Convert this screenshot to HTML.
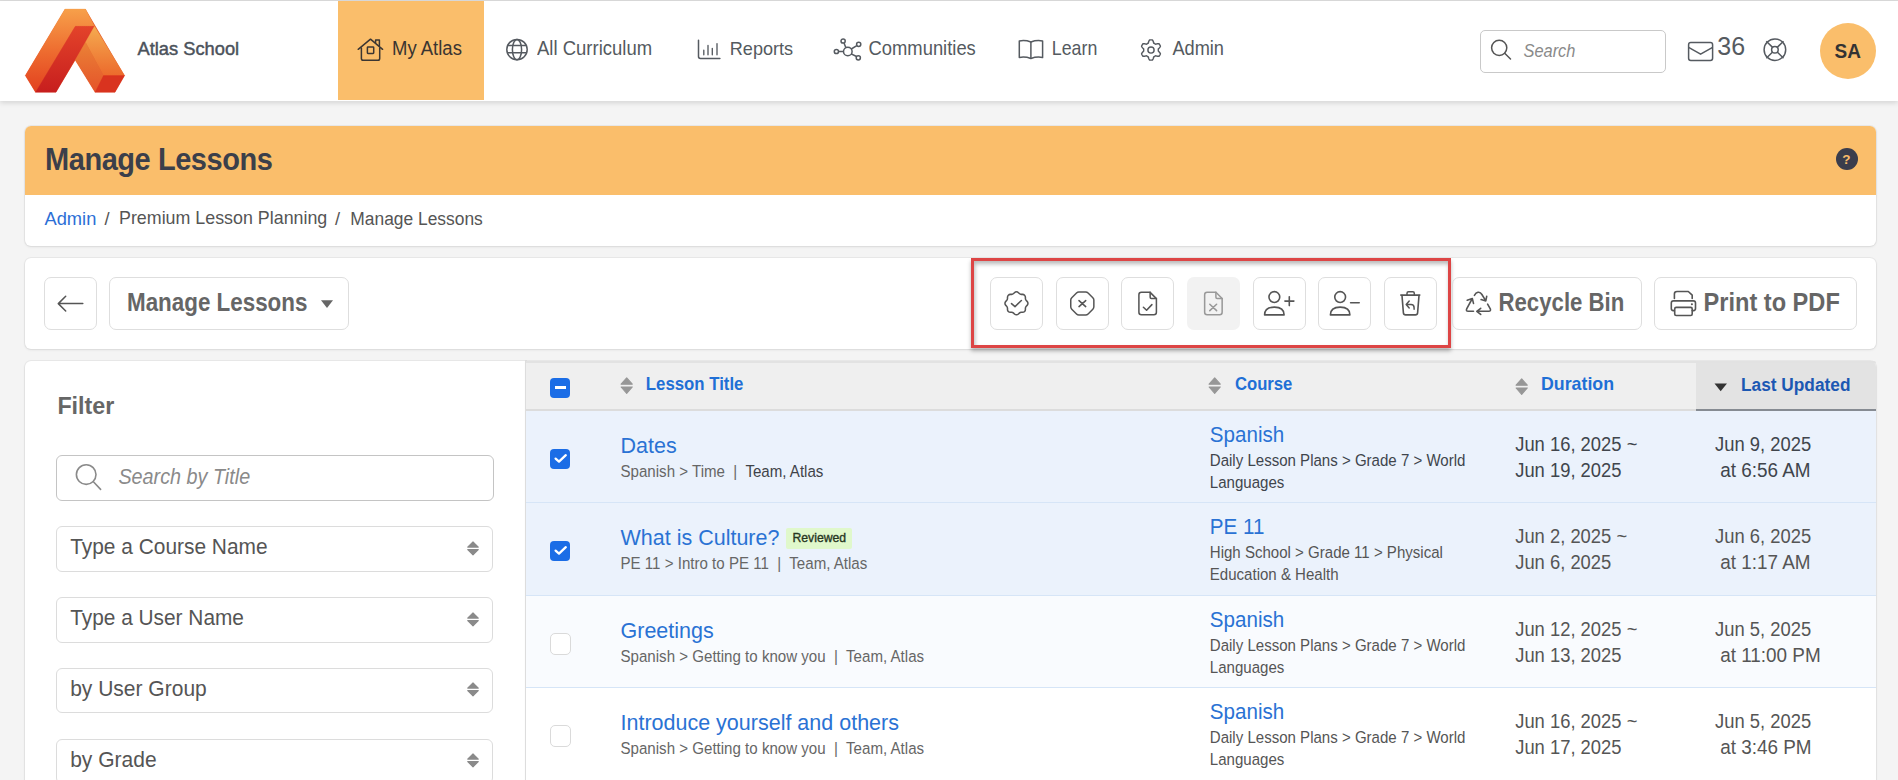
<!DOCTYPE html>
<html><head><meta charset="utf-8"><style>
html,body{margin:0;padding:0;}
body{width:1898px;height:780px;overflow:hidden;background:#f4f4f4;position:relative;font-family:"Liberation Sans",sans-serif;}
.t{position:absolute;line-height:1;white-space:nowrap;}
.r{position:absolute;}
</style></head><body>
<div class="r" style="left:0px;top:0px;width:1898px;height:1px;background:#dcdcdc"></div>
<div class="r" style="left:0px;top:1px;width:1898px;height:100px;background:#fff;box-shadow:0 2px 5px rgba(0,0,0,.13)"></div>
<svg class="r" style="left:15px;top:0px;" width="120" height="100" viewBox="0 0 120 100" fill="none">
<defs>
<linearGradient id="lg1" x1="0" y1="0" x2="0" y2="1"><stop offset="0" stop-color="#f7a04a"/><stop offset="0.5" stop-color="#ee6d30"/><stop offset="1" stop-color="#e2401f"/></linearGradient>
<linearGradient id="lg2" x1="0" y1="0" x2="0" y2="1"><stop offset="0" stop-color="#e3432a"/><stop offset="1" stop-color="#c71e1e"/></linearGradient>
<linearGradient id="lg3" x1="0" y1="0" x2="0" y2="1"><stop offset="0" stop-color="#f5ab50"/><stop offset="1" stop-color="#ec6a2c"/></linearGradient>
<linearGradient id="lg4" x1="0" y1="0" x2="0" y2="1"><stop offset="0" stop-color="#ea8236"/><stop offset="1" stop-color="#e5532a"/></linearGradient>
</defs>
<polygon points="50,9 70.5,9 109.6,75.6 100,92.3 80.1,92.3 60.3,60.3 41,92.3 20.5,92.3 10.3,75.6" fill="#e55a2a"/>
<polygon points="50,9 70.5,9 79.5,26.3 60.3,26.3 20.5,92.3 10.3,75.6" fill="url(#lg1)" stroke="url(#lg1)" stroke-width="0.3"/>
<polygon points="60.3,26.3 79.5,26.3 41,92.3 20.5,92.3" fill="url(#lg2)" stroke="url(#lg2)" stroke-width="0.3"/>
<polygon points="79.5,26.3 109.6,75.6 88.5,75.6 70.5,42.3" fill="url(#lg3)" stroke="url(#lg3)" stroke-width="0.3"/>
<polygon points="70.5,42.3 88.5,75.6 80.1,92.3 60.3,60.3" fill="url(#lg4)" stroke="url(#lg4)" stroke-width="0.3"/>
<polygon points="88.5,75.6 109.6,75.6 100,92.3 80.1,92.3" fill="#d9331f" stroke="#d9331f" stroke-width="0.3"/>
</svg>
<div class="t" style="left:137.5px;top:40.41px;font-size:18.3px;color:#4b525b;transform:scaleY(1.04);transform-origin:0 15.49px;-webkit-text-stroke:0.45px #4b525b;">Atlas School</div>
<div class="r" style="left:338px;top:1px;width:146px;height:99px;background:#fabe6b"></div>
<svg class="r" style="left:356px;top:37px;" width="30" height="26" viewBox="0 0 30 26" fill="none"><g stroke="#3b3632" stroke-width="1.5" stroke-linecap="round" stroke-linejoin="round">
<path d="M2.2 12.3 L14.5 2.2 L26.6 12.3"/><path d="M5.4 11 V21.5 Q5.4 23.3 7.2 23.3 H21.9 Q23.7 23.3 23.7 21.5 V11"/>
<path d="M19.6 5.5 V3.1 H23.4 V8.7"/><rect x="11.4" y="10" width="6.3" height="6.4" rx="0.6"/></g></svg>
<div class="t" style="left:392px;top:40.24px;font-size:18.5px;color:#3a3531;transform:scaleY(1.07);transform-origin:0 15.66px;">My Atlas</div>
<svg class="r" style="left:505px;top:38px;" width="24" height="24" viewBox="0 0 24 24" fill="none"><g stroke="#555a60" stroke-width="1.5"><circle cx="12" cy="11.6" r="10.2"/><ellipse cx="12" cy="11.6" rx="4.6" ry="10.2"/><path d="M2.2 7.6 H21.8 M2.2 14.8 H21.8"/></g></svg>
<div class="t" style="left:537px;top:40.04px;font-size:18.5px;color:#545a60;transform:scaleY(1.06);transform-origin:0 15.66px;">All Curriculum</div>
<svg class="r" style="left:696px;top:38px;" width="26" height="23" viewBox="0 0 26 23" fill="none"><g stroke="#555a60" stroke-width="1.5" stroke-linecap="round"><path d="M2.5 2.2 V18.6 Q2.5 20.5 4.4 20.5 H23.9"/><path stroke-width="1.35" d="M7.8 12.2 V16.7 M12 7.5 V16.7 M16.3 10.3 V16.7 M21 5.6 V16.7"/></g></svg>
<div class="t" style="left:729.8px;top:40.18px;font-size:18.1px;color:#545a60;transform:scaleY(1.05);transform-origin:0 15.32px;">Reports</div>
<svg class="r" style="left:832px;top:37px;" width="31" height="26" viewBox="0 0 31 26" fill="none"><g stroke="#555a60" stroke-width="1.5"><circle cx="15.8" cy="14.5" r="4.3"/><circle cx="11.1" cy="4" r="2.1"/><circle cx="26.7" cy="7.3" r="2.1"/><circle cx="4.4" cy="14.5" r="2.1"/><circle cx="26.3" cy="20.8" r="2.1"/>
<path d="M12 6 L13.8 10.6 M24.8 8.6 L19.3 12 M6.5 14.5 H11.5 M24.6 19.5 L19.1 16.8"/></g></svg>
<div class="t" style="left:868.5px;top:40.12px;font-size:18.4px;color:#545a60;transform:scaleY(1.06);transform-origin:0 15.58px;">Communities</div>
<svg class="r" style="left:1017px;top:38px;" width="28" height="23" viewBox="0 0 28 23" fill="none"><g stroke="#555a60" stroke-width="1.5" stroke-linejoin="round"><path d="M13.9 4 Q8 1.8 2.3 3 V19.5 Q8 18.4 13.9 20.5 Q19.8 18.4 25.6 19.5 V3 Q19.8 1.8 13.9 4 Z"/><path d="M13.9 4 V20.5"/></g></svg>
<div class="t" style="left:1051.8px;top:40.63px;font-size:17.8px;color:#545a60;transform:scaleY(1.1);transform-origin:0 15.07px;">Learn</div>
<svg class="r" style="left:1139.1px;top:37.7px;" width="24" height="24" viewBox="0 0 24 24" fill="none"><g stroke="#555a60" stroke-width="1.45" stroke-linejoin="round"><path d="M19.35 12.00 L19.35 12.26 L19.33 12.51 L19.31 12.77 L19.28 13.02 L19.58 13.34 L19.92 13.68 L20.28 14.06 L20.62 14.47 L20.94 14.90 L21.21 15.35 L21.41 15.80 L21.27 16.13 L21.12 16.45 L20.96 16.77 L20.79 17.07 L20.61 17.38 L20.41 17.68 L20.21 17.97 L20.00 18.25 L19.51 18.30 L18.98 18.29 L18.45 18.23 L17.93 18.14 L17.42 18.02 L16.95 17.90 L16.53 17.79 L16.32 17.95 L16.11 18.09 L15.89 18.23 L15.68 18.37 L15.45 18.49 L15.22 18.61 L14.99 18.71 L14.75 18.81 L14.63 19.24 L14.50 19.70 L14.35 20.20 L14.17 20.70 L13.95 21.19 L13.70 21.65 L13.41 22.05 L13.06 22.09 L12.71 22.13 L12.35 22.14 L12.00 22.15 L11.65 22.14 L11.29 22.13 L10.94 22.09 L10.59 22.05 L10.30 21.65 L10.05 21.19 L9.83 20.70 L9.65 20.20 L9.50 19.70 L9.37 19.24 L9.25 18.81 L9.01 18.71 L8.78 18.61 L8.55 18.49 L8.33 18.37 L8.11 18.23 L7.89 18.09 L7.68 17.95 L7.47 17.79 L7.05 17.90 L6.58 18.02 L6.07 18.14 L5.55 18.23 L5.02 18.29 L4.49 18.30 L4.00 18.25 L3.79 17.97 L3.59 17.68 L3.39 17.38 L3.21 17.07 L3.04 16.77 L2.88 16.45 L2.73 16.13 L2.59 15.80 L2.79 15.35 L3.06 14.90 L3.38 14.47 L3.72 14.06 L4.08 13.68 L4.42 13.34 L4.72 13.02 L4.69 12.77 L4.67 12.51 L4.65 12.26 L4.65 12.00 L4.65 11.74 L4.67 11.49 L4.69 11.23 L4.72 10.98 L4.42 10.66 L4.08 10.32 L3.72 9.94 L3.38 9.53 L3.06 9.10 L2.79 8.65 L2.59 8.20 L2.73 7.87 L2.88 7.55 L3.04 7.23 L3.21 6.92 L3.39 6.62 L3.59 6.32 L3.79 6.03 L4.00 5.75 L4.49 5.70 L5.02 5.71 L5.55 5.77 L6.07 5.86 L6.58 5.98 L7.05 6.10 L7.47 6.21 L7.68 6.05 L7.89 5.91 L8.11 5.77 L8.32 5.63 L8.55 5.51 L8.78 5.39 L9.01 5.29 L9.25 5.19 L9.37 4.76 L9.50 4.30 L9.65 3.80 L9.83 3.30 L10.05 2.81 L10.30 2.35 L10.59 1.95 L10.94 1.91 L11.29 1.87 L11.65 1.86 L12.00 1.85 L12.35 1.86 L12.71 1.87 L13.06 1.91 L13.41 1.95 L13.70 2.35 L13.95 2.81 L14.17 3.30 L14.35 3.80 L14.50 4.30 L14.63 4.76 L14.75 5.19 L14.99 5.29 L15.22 5.39 L15.45 5.51 L15.68 5.63 L15.89 5.77 L16.11 5.91 L16.32 6.05 L16.53 6.21 L16.95 6.10 L17.42 5.98 L17.93 5.86 L18.45 5.77 L18.98 5.71 L19.51 5.70 L20.00 5.75 L20.21 6.03 L20.41 6.32 L20.61 6.62 L20.79 6.92 L20.96 7.23 L21.12 7.55 L21.27 7.87 L21.41 8.20 L21.21 8.65 L20.94 9.10 L20.62 9.53 L20.28 9.94 L19.92 10.32 L19.58 10.66 L19.28 10.98 L19.31 11.23 L19.33 11.49 L19.35 11.74 Z"/><circle cx="12" cy="12" r="3.1"/></g></svg>
<div class="t" style="left:1172.4px;top:40.29px;font-size:18.2px;color:#545a60;transform:scaleY(1.08);transform-origin:0 15.41px;">Admin</div>
<div class="r" style="left:1479.5px;top:29.5px;width:186px;height:43px;border:1px solid #c9c9c9;border-radius:5px;box-sizing:border-box;background:#fff"></div>
<svg class="r" style="left:1489px;top:38px;" width="25" height="23" viewBox="0 0 25 23" fill="none"><g stroke="#555" stroke-width="1.5" stroke-linecap="round"><circle cx="10.2" cy="9.8" r="7.6"/><path d="M15.7 15.3 L21.5 21"/></g></svg>
<div class="t" style="left:1523.5px;top:42.62px;font-size:16.4px;color:#8a8a8a;transform:scaleY(1.1);transform-origin:0 13.88px;font-style:italic;">Search</div>
<svg class="r" style="left:1687px;top:41px;" width="28" height="21" viewBox="0 0 28 21" fill="none"><g stroke="#555a60" stroke-width="1.5" stroke-linejoin="round"><rect x="1.6" y="1.6" width="24" height="17.9" rx="2.2"/><path d="M1.6 6.3 L13.6 13.2 L25.6 6.3"/></g></svg>
<div class="t" style="left:1717.3px;top:33.84px;font-size:25px;color:#555a60;transform:scaleY(1.02);transform-origin:0 21.16px;">36</div>
<svg class="r" style="left:1762px;top:37px;" width="26" height="26" viewBox="0 0 26 26" fill="none"><g stroke="#555a60" stroke-width="1.5"><circle cx="12.9" cy="12.7" r="10.8"/><circle cx="12.9" cy="12.7" r="3.3"/><path d="M4.3 4.2 L10.6 10.4 M21.5 4.2 L15.2 10.4 M4.3 21.2 L10.6 15 M21.5 21.2 L15.2 15"/></g></svg>
<div class="r" style="left:1820px;top:22.8px;width:56px;height:56px;background:#fabe6b;border-radius:50%"></div>
<div class="t" style="left:1834.5px;top:41.82px;font-size:19px;color:#333;transform:scaleY(1.08);transform-origin:0 16.08px;font-weight:700;">SA</div>
<div class="r" style="left:25px;top:126px;width:1851px;height:120px;background:#fff;border-radius:6px;box-shadow:0 0 0 1px rgba(0,0,0,.045), 0 1px 3px rgba(0,0,0,.08);overflow:hidden"></div>
<div class="r" style="left:25px;top:126px;width:1851px;height:68.5px;background:#fabe6b;border-radius:6px 6px 0 0"></div>
<div class="t" style="left:45px;top:146.25px;font-size:29px;color:#3b3f4a;transform:scaleY(1.06);transform-origin:0 24.55px;font-weight:700;letter-spacing:-0.45px;">Manage Lessons</div>
<div class="r" style="left:1835.8px;top:147.9px;width:21.8px;height:21.8px;background:#3a3d4c;border-radius:50%"></div>
<div class="t" style="left:1842.2px;top:152.57px;font-size:13.5px;color:#fabe6b;font-weight:700;">?</div>
<div class="t" style="left:44.5px;top:210.01px;font-size:18.3px;color:#2c6fd6;transform:scaleY(1.04);transform-origin:0 15.49px;">Admin</div>
<div class="t" style="left:104.5px;top:210.01px;font-size:18.3px;color:#555;">/</div>
<div class="t" style="left:119px;top:210.39px;font-size:17.85px;color:#555;transform:scaleY(1.06);transform-origin:0 15.11px;">Premium Lesson Planning</div>
<div class="t" style="left:335px;top:210.01px;font-size:18.3px;color:#555;">/</div>
<div class="t" style="left:350.3px;top:210.77px;font-size:17.4px;color:#555;transform:scaleY(1.08);transform-origin:0 14.73px;">Manage Lessons</div>
<div class="r" style="left:25px;top:258px;width:1851px;height:91px;background:#fff;border-radius:6px;box-shadow:0 0 0 1px rgba(0,0,0,.045), 0 1px 3px rgba(0,0,0,.08)"></div>
<div class="r" style="left:44px;top:277px;width:53px;height:53px;border:1px solid #dedede;border-radius:7px;box-sizing:border-box"></div>
<div class="r" style="left:109px;top:277px;width:240px;height:53px;border:1px solid #dedede;border-radius:7px;box-sizing:border-box"></div>
<div class="t" style="left:127px;top:292.64px;font-size:22.4px;color:#666;transform:scaleY(1.12);transform-origin:0 18.96px;font-weight:700;">Manage Lessons</div>
<svg class="r" style="left:320px;top:299px;" width="14" height="10" viewBox="0 0 14 10" fill="none"><path d="M1 1.2 H13 L7 9 Z" fill="#666"/></svg>
<div class="r" style="left:971px;top:258px;width:480px;height:90px;border:3.4px solid #dd4545;box-sizing:border-box;box-shadow:inset 1px 3px 4px rgba(0,0,0,.28), 0 3px 4px rgba(0,0,0,.28)"></div>
<div class="r" style="left:990px;top:277px;width:53px;height:53px;border:1px solid #dedede;border-radius:7px;box-sizing:border-box;background:#fff"></div>
<div class="r" style="left:1056px;top:277px;width:53px;height:53px;border:1px solid #dedede;border-radius:7px;box-sizing:border-box;background:#fff"></div>
<div class="r" style="left:1121px;top:277px;width:53px;height:53px;border:1px solid #dedede;border-radius:7px;box-sizing:border-box;background:#fff"></div>
<div class="r" style="left:1187px;top:277px;width:53px;height:53px;background:#f2f2f2;border-radius:7px"></div>
<div class="r" style="left:1253px;top:277px;width:53px;height:53px;border:1px solid #dedede;border-radius:7px;box-sizing:border-box;background:#fff"></div>
<div class="r" style="left:1318px;top:277px;width:53px;height:53px;border:1px solid #dedede;border-radius:7px;box-sizing:border-box;background:#fff"></div>
<div class="r" style="left:1384px;top:277px;width:53px;height:53px;border:1px solid #dedede;border-radius:7px;box-sizing:border-box;background:#fff"></div>
<svg class="r" style="left:0;top:0" width="1898" height="780" viewBox="0 0 1898 780" fill="none" stroke-linecap="round" stroke-linejoin="round">
<g stroke="#555">
<path transform="translate(1001.1 288) scale(1.278)" stroke-width="1.2" d="M5 7.2a2.2 2.2 0 0 1 2.2 -2.2h1a2.2 2.2 0 0 0 1.55 -.64l.7 -.7a2.2 2.2 0 0 1 3.12 0l.7 .7c.412 .41 .97 .64 1.55 .64h1a2.2 2.2 0 0 1 2.2 2.2v1c0 .58 .23 1.138 .64 1.55l.7 .7a2.2 2.2 0 0 1 0 3.12l-.7 .7a2.2 2.2 0 0 0 -.64 1.55v1a2.2 2.2 0 0 1 -2.2 2.2h-1a2.2 2.2 0 0 0 -1.55 .64l-.7 .7a2.2 2.2 0 0 1 -3.12 0l-.7 -.7a2.2 2.2 0 0 0 -1.55 -.64h-1a2.2 2.2 0 0 1 -2.2 -2.2v-1a2.2 2.2 0 0 0 -.64 -1.55l-.7 -.7a2.2 2.2 0 0 1 0 -3.12l.7 -.7a2.2 2.2 0 0 0 .64 -1.55v-1"/>
<path stroke-width="1.55" d="M1011.5 303.6 L1015 306.6 L1021.4 300.5"/>
<path transform="translate(1068.44 289.6) scale(1.155)" stroke-width="1.3" d="M9.103 2h5.794a3 3 0 0 1 2.122 .879l4.101 4.1a3 3 0 0 1 .88 2.125v5.794a3 3 0 0 1 -.879 2.122l-4.1 4.101a3 3 0 0 1 -2.123 .88h-5.795a3 3 0 0 1 -2.122 -.88l-4.101 -4.1a3 3 0 0 1 -.88 -2.124v-5.794a3 3 0 0 1 .88 -2.122l4.1 -4.101a3 3 0 0 1 2.125 -.88z"/>
<path stroke-width="1.55" d="M1079 300.6 L1085.7 306.6 M1085.7 300.6 L1079 306.6"/>
<g transform="translate(1132.65 288.6) scale(1.25)" stroke-width="1.22"><path d="M14 3v4a1 1 0 0 0 1 1h4"/><path d="M17 21h-10a2 2 0 0 1 -2 -2v-14a2 2 0 0 1 2 -2h7l5 5v11a2 2 0 0 1 -2 2z"/></g>
<path stroke-width="1.55" d="M1143.4 307.3 L1146.6 310.3 L1151.9 304.6"/>
<circle cx="1274.35" cy="297.05" r="5.4" stroke-width="1.6"/>
<path stroke-width="1.6" d="M1264.6 314.9 C1264.6 309.3 1268.3 307.1 1274.35 307.1 C1280.4 307.1 1284.1 309.3 1284.1 314.9 Z"/>
<path stroke-width="1.6" d="M1284.9 301.1 H1293.9 M1289.3 296.7 V305.6"/>
<circle cx="1340.15" cy="297.05" r="5.4" stroke-width="1.6"/>
<path stroke-width="1.6" d="M1330.4 314.9 C1330.4 309.3 1334.1 307.1 1340.15 307.1 C1346.2 307.1 1349.9 309.3 1349.9 314.9 Z"/>
<path stroke-width="1.6" d="M1350.6 302.7 H1359.2"/>
<path stroke-width="1.6" d="M1400.8 295.1 H1419.8"/>
<path stroke-width="1.5" d="M1407 295 V293.3 Q1407 291.8 1408.5 291.8 H1412.8 Q1414.3 291.8 1414.3 293.3 V295"/>
<path stroke-width="1.6" d="M1402 295.6 L1403.4 312.9 Q1403.6 314.9 1405.6 314.9 H1415.4 Q1417.4 314.9 1417.6 312.9 L1419 295.6"/>
<path stroke-width="1.5" d="M1409.2 301 L1406.2 304.5 L1409.2 307.9 M1406.5 304.5 H1411 Q1414.1 304.5 1414.1 307.7 V309.2"/>
<path stroke-width="1.6" d="M1474.4 295.3 C1476.2 292.2 1479.6 290.6 1481.9 294.5 L1485.8 300.9 M1481.1 299.6 L1485.8 300.9 L1486.7 296.4"/>
<path stroke-width="1.6" d="M1487.6 304.1 L1490.3 308.8 Q1491.2 311.3 1488.6 311.3 H1476.8 M1480.7 308.3 L1476.8 311.3 L1480.7 314.4"/>
<path stroke-width="1.6" d="M1473.5 311.3 H1468.2 Q1465.6 311.3 1466.8 308.6 L1472.3 298.5 M1467.2 300.3 L1472.3 298.5 L1473.5 303.4"/>
<path stroke-width="1.6" d="M1674.4 298.5 V294 Q1674.4 291.5 1677 291.5 H1688.3 L1692.2 295.2 V298.5"/>
<path stroke-width="1.6" d="M1674.4 310.6 H1673.3 Q1671.3 310.6 1671.3 308.6 V303.1 Q1671.3 300.9 1673.5 300.9 H1693.3 Q1695.5 300.9 1695.5 303.1 V308.6 Q1695.5 310.6 1693.5 310.6 H1692.2"/>
<rect x="1674.7" y="307.4" width="17.5" height="8.1" rx="1.5" stroke-width="1.6"/>
<path stroke-width="1.5" d="M82.8 303.6 H58.5 M65.7 296.3 L58.3 303.6 L65.7 311"/>
</g>
<circle cx="1691.9" cy="304.3" r="1.05" fill="#555"/>
<g stroke="#999">
<g transform="translate(1198.4 288.45) scale(1.25)" stroke-width="1.22"><path d="M14 3v4a1 1 0 0 0 1 1h4"/><path d="M17 21h-10a2 2 0 0 1 -2 -2v-14a2 2 0 0 1 2 -2h7l5 5v11a2 2 0 0 1 -2 2z"/></g>
<path stroke-width="1.55" d="M1209.8 304.2 L1216.6 310.6 M1216.6 304.2 L1209.8 310.6"/>
</g>
</svg>
<div class="r" style="left:1452px;top:277px;width:190px;height:53px;border:1px solid #dedede;border-radius:7px;box-sizing:border-box"></div>
<div class="t" style="left:1498.5px;top:292.51px;font-size:22.2px;color:#666;transform:scaleY(1.12);transform-origin:0 18.79px;font-weight:700;">Recycle Bin</div>
<div class="r" style="left:1654px;top:277px;width:203px;height:53px;border:1px solid #dedede;border-radius:7px;box-sizing:border-box"></div>
<div class="t" style="left:1703.5px;top:291.82px;font-size:23.6px;color:#666;transform:scaleY(1.06);transform-origin:0 19.98px;font-weight:700;">Print to PDF</div>
<div class="r" style="left:25px;top:361px;width:501px;height:430px;background:#fff;border-radius:6px 0 0 0;box-shadow:0 0 0 1px rgba(0,0,0,.045), 0 1px 3px rgba(0,0,0,.08)"></div>
<div class="t" style="left:57.4px;top:394.88px;font-size:23.3px;color:#666;transform:scaleY(1.05);transform-origin:0 19.72px;font-weight:700;">Filter</div>
<div class="r" style="left:56px;top:455px;width:438px;height:46px;border:1px solid #c4c4c4;border-radius:6px;box-sizing:border-box"></div>
<svg class="r" style="left:73px;top:462px;" width="32" height="31" viewBox="0 0 32 31" fill="none"><g stroke="#8a8a8a" stroke-width="1.6" stroke-linecap="round"><circle cx="13.2" cy="12.6" r="9.8"/><path d="M20.4 19.8 L27.6 27.4"/></g></svg>
<div class="t" style="left:118.4px;top:468.44px;font-size:19.8px;color:#8a8a8a;transform:scaleY(1.1);transform-origin:0 16.76px;font-style:italic;">Search by Title</div>
<div class="r" style="left:56px;top:526px;width:437px;height:45.5px;border:1px solid #dcdcdc;border-radius:6px;box-sizing:border-box"></div>
<div class="t" style="left:70.2px;top:536.51px;font-size:20.9px;color:#555;transform:scaleY(1.07);transform-origin:0 17.69px;">Type a Course Name</div>
<svg class="r" style="left:466px;top:540.5px;" width="14" height="16" viewBox="0 0 14 16" fill="none"><path d="M1.7 6.1 L7 0.9 L12.3 6.1 Z M1.7 8.6 L7 13.8 L12.3 8.6 Z" fill="#8a8a8a" stroke="#8a8a8a" stroke-width="1.1" stroke-linejoin="round"/></svg>
<div class="r" style="left:56px;top:597px;width:437px;height:45.5px;border:1px solid #dcdcdc;border-radius:6px;box-sizing:border-box"></div>
<div class="t" style="left:70.2px;top:607.55px;font-size:20.85px;color:#555;transform:scaleY(1.07);transform-origin:0 17.65px;">Type a User Name</div>
<svg class="r" style="left:466px;top:611.5px;" width="14" height="16" viewBox="0 0 14 16" fill="none"><path d="M1.7 6.1 L7 0.9 L12.3 6.1 Z M1.7 8.6 L7 13.8 L12.3 8.6 Z" fill="#8a8a8a" stroke="#8a8a8a" stroke-width="1.1" stroke-linejoin="round"/></svg>
<div class="r" style="left:56px;top:667.5px;width:437px;height:45.5px;border:1px solid #dcdcdc;border-radius:6px;box-sizing:border-box"></div>
<div class="t" style="left:70.2px;top:677.92px;font-size:21px;color:#555;transform:scaleY(1.07);transform-origin:0 17.78px;">by User Group</div>
<svg class="r" style="left:466px;top:682.0px;" width="14" height="16" viewBox="0 0 14 16" fill="none"><path d="M1.7 6.1 L7 0.9 L12.3 6.1 Z M1.7 8.6 L7 13.8 L12.3 8.6 Z" fill="#8a8a8a" stroke="#8a8a8a" stroke-width="1.1" stroke-linejoin="round"/></svg>
<div class="r" style="left:56px;top:738.5px;width:437px;height:45.5px;border:1px solid #dcdcdc;border-radius:6px;box-sizing:border-box"></div>
<div class="t" style="left:70.2px;top:748.92px;font-size:21px;color:#555;transform:scaleY(1.07);transform-origin:0 17.78px;">by Grade</div>
<svg class="r" style="left:466px;top:753.0px;" width="14" height="16" viewBox="0 0 14 16" fill="none"><path d="M1.7 6.1 L7 0.9 L12.3 6.1 Z M1.7 8.6 L7 13.8 L12.3 8.6 Z" fill="#8a8a8a" stroke="#8a8a8a" stroke-width="1.1" stroke-linejoin="round"/></svg>
<div class="r" style="left:526px;top:361px;width:1350px;height:430px;background:#fff;border-radius:0 6px 0 0;box-shadow:0 0 0 1px rgba(0,0,0,.045), 0 1px 3px rgba(0,0,0,.08)"></div>
<div class="r" style="left:525px;top:361px;width:1px;height:430px;background:#dddddd"></div>
<div class="r" style="left:526px;top:361px;width:1350px;height:49.5px;background:#efefef;border-radius:0 6px 0 0"></div>
<div class="r" style="left:1696px;top:361px;width:180px;height:49px;background:#e3e3e3;border-radius:0 6px 0 0"></div>
<div class="r" style="left:526px;top:361px;width:1350px;height:1.5px;background:#e2e2e2;border-radius:0 6px 0 0"></div>
<div class="r" style="left:526px;top:409px;width:1170px;height:2px;background:#dcdcdc"></div>
<div class="r" style="left:1696px;top:409px;width:180px;height:1.6px;background:#868b92"></div>
<div class="r" style="left:550px;top:377.8px;width:20px;height:20px;background:#1b6de6;border-radius:4px"></div>
<div class="r" style="left:555px;top:385.8px;width:11px;height:3.3px;background:#fff"></div>
<svg class="r" style="left:619.5px;top:377.3px;" width="14" height="18" viewBox="0 0 14 18" fill="none"><path d="M1.1 7.2 L6.7 0.9 L12.3 7.2 Z M1.1 10 L6.7 16.3 L12.3 10 Z" fill="#979797" stroke="#979797" stroke-width="1.1" stroke-linejoin="round"/></svg>
<div class="t" style="left:645.8px;top:377.28px;font-size:16.8px;color:#1f6fd6;transform:scaleY(1.13);transform-origin:0 14.22px;font-weight:700;">Lesson Title</div>
<svg class="r" style="left:1208.3px;top:377.3px;" width="14" height="18" viewBox="0 0 14 18" fill="none"><path d="M1.1 7.2 L6.7 0.9 L12.3 7.2 Z M1.1 10 L6.7 16.3 L12.3 10 Z" fill="#979797" stroke="#979797" stroke-width="1.1" stroke-linejoin="round"/></svg>
<div class="t" style="left:1234.9px;top:377.36px;font-size:16.7px;color:#1f6fd6;transform:scaleY(1.13);transform-origin:0 14.14px;font-weight:700;">Course</div>
<svg class="r" style="left:1514.5px;top:377.5px;" width="14" height="18" viewBox="0 0 14 18" fill="none"><path d="M1.1 7.2 L6.7 0.9 L12.3 7.2 Z M1.1 10 L6.7 16.3 L12.3 10 Z" fill="#979797" stroke="#979797" stroke-width="1.1" stroke-linejoin="round"/></svg>
<div class="t" style="left:1541px;top:376.43px;font-size:17.8px;color:#1f6fd6;transform:scaleY(1.08);transform-origin:0 15.07px;font-weight:700;">Duration</div>
<svg class="r" style="left:1714px;top:382.5px;" width="14" height="9" viewBox="0 0 14 9" fill="none"><path d="M0.5 0.6 H13 L6.7 8.2 Z" fill="#333"/></svg>
<div class="t" style="left:1741px;top:376.86px;font-size:17.3px;color:#1c58b3;transform:scaleY(1.11);transform-origin:0 14.64px;font-weight:700;">Last Updated</div>
<div class="r" style="left:526px;top:410.5px;width:1350px;height:92px;background:#ebf2fc"></div>
<div class="r" style="left:526px;top:501.5px;width:1350px;height:1.3px;background:#d6e5f7"></div>
<div class="r" style="left:550px;top:448.7px;width:20px;height:20px;background:#1b6de6;border-radius:4px"></div>
<svg class="r" style="left:550px;top:448.7px;" width="20" height="20" viewBox="0 0 20 20" fill="none"><path d="M5.6 9.6 L9 12.6 L15.8 6.2" stroke="#fff" stroke-width="2.3" stroke-linecap="round" stroke-linejoin="round"/></svg>
<div class="t" style="left:620.5px;top:436.20px;font-size:21.5px;color:#2a72d4;transform:scaleY(1.03);transform-origin:0 18.20px;">Dates</div>
<div class="t" style="left:620.5px;top:464.12px;font-size:15.1px;color:#666;transform:scaleY(1.05);transform-origin:0 12.78px;">Spanish &gt; Time &nbsp;|&nbsp; <span style="color:#3f4349">Team, Atlas</span></div>
<div class="t" style="left:1209.8px;top:425.26px;font-size:20.6px;color:#2a72d4;transform:scaleY(1.06);transform-origin:0 17.44px;">Spanish</div>
<div class="t" style="left:1209.8px;top:453.16px;font-size:15.05px;color:#40454c;transform:scaleY(1.1);transform-origin:0 12.74px;">Daily Lesson Plans &gt; Grade 7 &gt; World</div>
<div class="t" style="left:1209.8px;top:475.26px;font-size:15.05px;color:#40454c;transform:scaleY(1.1);transform-origin:0 12.74px;">Languages</div>
<div class="t" style="left:1515.2px;top:436.32px;font-size:18.4px;color:#40454c;transform:scaleY(1.06);transform-origin:0 15.58px;">Jun 16, 2025 ~</div>
<div class="t" style="left:1515.2px;top:462.22px;font-size:18.4px;color:#40454c;transform:scaleY(1.06);transform-origin:0 15.58px;">Jun 19, 2025</div>
<div class="t" style="left:1715px;top:436.32px;font-size:18.4px;color:#40454c;transform:scaleY(1.06);transform-origin:0 15.58px;">Jun 9, 2025</div>
<div class="t" style="left:1715px;top:461.80px;font-size:18.9px;color:#40454c;transform:scaleY(1.04);transform-origin:0 16.00px;">&nbsp;at 6:56 AM</div>
<div class="r" style="left:526px;top:502.5px;width:1350px;height:93px;background:#ebf2fc"></div>
<div class="r" style="left:526px;top:594.5px;width:1350px;height:1.3px;background:#d6e5f7"></div>
<div class="r" style="left:550px;top:540.7px;width:20px;height:20px;background:#1b6de6;border-radius:4px"></div>
<svg class="r" style="left:550px;top:540.7px;" width="20" height="20" viewBox="0 0 20 20" fill="none"><path d="M5.6 9.6 L9 12.6 L15.8 6.2" stroke="#fff" stroke-width="2.3" stroke-linecap="round" stroke-linejoin="round"/></svg>
<div class="t" style="left:620.5px;top:528.20px;font-size:21.5px;color:#2a72d4;transform:scaleY(1.03);transform-origin:0 18.20px;">What is Culture?</div>
<div class="r" style="left:786px;top:527.9px;width:65.5px;height:21.6px;background:#e0f8cb;border-radius:2px"></div>
<div class="t" style="left:792.5px;top:531.57px;font-size:12.2px;color:#27361f;transform:scaleY(1.04);transform-origin:0 10.33px;-webkit-text-stroke:0.35px #27361f;">Reviewed</div>
<div class="t" style="left:620.5px;top:556.12px;font-size:15.1px;color:#666;transform:scaleY(1.05);transform-origin:0 12.78px;">PE 11 &gt; Intro to PE 11 &nbsp;|&nbsp; Team, Atlas</div>
<div class="t" style="left:1209.8px;top:517.26px;font-size:20.6px;color:#2a72d4;transform:scaleY(1.06);transform-origin:0 17.44px;">PE 11</div>
<div class="t" style="left:1209.8px;top:545.16px;font-size:15.05px;color:#555;transform:scaleY(1.1);transform-origin:0 12.74px;">High School &gt; Grade 11 &gt; Physical</div>
<div class="t" style="left:1209.8px;top:567.26px;font-size:15.05px;color:#555;transform:scaleY(1.1);transform-origin:0 12.74px;">Education &amp; Health</div>
<div class="t" style="left:1515.2px;top:528.32px;font-size:18.4px;color:#555;transform:scaleY(1.06);transform-origin:0 15.58px;">Jun 2, 2025 ~</div>
<div class="t" style="left:1515.2px;top:554.22px;font-size:18.4px;color:#555;transform:scaleY(1.06);transform-origin:0 15.58px;">Jun 6, 2025</div>
<div class="t" style="left:1715px;top:528.32px;font-size:18.4px;color:#555;transform:scaleY(1.06);transform-origin:0 15.58px;">Jun 6, 2025</div>
<div class="t" style="left:1715px;top:553.80px;font-size:18.9px;color:#555;transform:scaleY(1.04);transform-origin:0 16.00px;">&nbsp;at 1:17 AM</div>
<div class="r" style="left:526px;top:595.5px;width:1350px;height:92px;background:#f9fbfe"></div>
<div class="r" style="left:526px;top:686.5px;width:1350px;height:1.3px;background:#d6e5f7"></div>
<div class="r" style="left:549.5px;top:633.0px;width:21.5px;height:21.5px;border:1px solid #dadada;border-radius:5px;box-sizing:border-box;background:#fff"></div>
<div class="t" style="left:620.5px;top:621.20px;font-size:21.5px;color:#2a72d4;transform:scaleY(1.03);transform-origin:0 18.20px;">Greetings</div>
<div class="t" style="left:620.5px;top:649.12px;font-size:15.1px;color:#666;transform:scaleY(1.05);transform-origin:0 12.78px;">Spanish &gt; Getting to know you &nbsp;|&nbsp; Team, Atlas</div>
<div class="t" style="left:1209.8px;top:610.26px;font-size:20.6px;color:#2a72d4;transform:scaleY(1.06);transform-origin:0 17.44px;">Spanish</div>
<div class="t" style="left:1209.8px;top:638.16px;font-size:15.05px;color:#555;transform:scaleY(1.1);transform-origin:0 12.74px;">Daily Lesson Plans &gt; Grade 7 &gt; World</div>
<div class="t" style="left:1209.8px;top:660.26px;font-size:15.05px;color:#555;transform:scaleY(1.1);transform-origin:0 12.74px;">Languages</div>
<div class="t" style="left:1515.2px;top:621.32px;font-size:18.4px;color:#555;transform:scaleY(1.06);transform-origin:0 15.58px;">Jun 12, 2025 ~</div>
<div class="t" style="left:1515.2px;top:647.22px;font-size:18.4px;color:#555;transform:scaleY(1.06);transform-origin:0 15.58px;">Jun 13, 2025</div>
<div class="t" style="left:1715px;top:621.32px;font-size:18.4px;color:#555;transform:scaleY(1.06);transform-origin:0 15.58px;">Jun 5, 2025</div>
<div class="t" style="left:1715px;top:646.80px;font-size:18.9px;color:#555;transform:scaleY(1.04);transform-origin:0 16.00px;">&nbsp;at 11:00 PM</div>
<div class="r" style="left:526px;top:687.5px;width:1350px;height:93px;background:#ffffff"></div>
<div class="r" style="left:526px;top:779.5px;width:1350px;height:1.3px;background:#d6e5f7"></div>
<div class="r" style="left:549.5px;top:725.0px;width:21.5px;height:21.5px;border:1px solid #dadada;border-radius:5px;box-sizing:border-box;background:#fff"></div>
<div class="t" style="left:620.5px;top:713.20px;font-size:21.5px;color:#2a72d4;transform:scaleY(1.03);transform-origin:0 18.20px;">Introduce yourself and others</div>
<div class="t" style="left:620.5px;top:741.12px;font-size:15.1px;color:#666;transform:scaleY(1.05);transform-origin:0 12.78px;">Spanish &gt; Getting to know you &nbsp;|&nbsp; Team, Atlas</div>
<div class="t" style="left:1209.8px;top:702.26px;font-size:20.6px;color:#2a72d4;transform:scaleY(1.06);transform-origin:0 17.44px;">Spanish</div>
<div class="t" style="left:1209.8px;top:730.16px;font-size:15.05px;color:#555;transform:scaleY(1.1);transform-origin:0 12.74px;">Daily Lesson Plans &gt; Grade 7 &gt; World</div>
<div class="t" style="left:1209.8px;top:752.26px;font-size:15.05px;color:#555;transform:scaleY(1.1);transform-origin:0 12.74px;">Languages</div>
<div class="t" style="left:1515.2px;top:713.32px;font-size:18.4px;color:#555;transform:scaleY(1.06);transform-origin:0 15.58px;">Jun 16, 2025 ~</div>
<div class="t" style="left:1515.2px;top:739.22px;font-size:18.4px;color:#555;transform:scaleY(1.06);transform-origin:0 15.58px;">Jun 17, 2025</div>
<div class="t" style="left:1715px;top:713.32px;font-size:18.4px;color:#555;transform:scaleY(1.06);transform-origin:0 15.58px;">Jun 5, 2025</div>
<div class="t" style="left:1715px;top:738.80px;font-size:18.9px;color:#555;transform:scaleY(1.04);transform-origin:0 16.00px;">&nbsp;at 3:46 PM</div>
</body></html>
